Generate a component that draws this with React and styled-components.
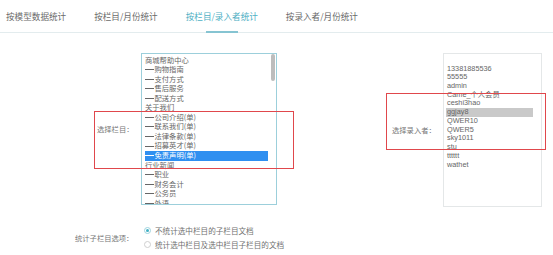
import React from "react";
import styled, { createGlobalStyle } from "styled-components";

const GlobalStyle = createGlobalStyle`
  html, body { margin: 0; padding: 0; background: #fff; }
  body { font-family: "Noto Sans CJK SC", "Liberation Sans", sans-serif; }
  * { box-sizing: border-box; }
`;

const Page = styled.div`
  position: relative;
  width: 553px;
  height: 255px;
  overflow: hidden;
  background: #fff;
`;

const TabBar = styled.div`
  display: flex;
  gap: 28px;
  height: 33px;
  padding-left: 6px;
  border-bottom: 1px solid #e3ecee;
`;

const Tab = styled.div`
  position: relative;
  display: flex;
  align-items: center;
  height: 32px;
  font-size: 8.6px;
  line-height: 1;
  color: ${(p) => (p.$active ? "#4fb0c4" : "#6a6a6a")};
  white-space: nowrap;
  &::after {
    content: "";
    display: ${(p) => (p.$active ? "block" : "none")};
    position: absolute;
    left: 50%;
    bottom: -1px;
    width: 32px;
    margin-left: -16px;
    height: 2px;
    background: #86c4d2;
  }
`;

const Main = styled.div`
  display: flex;
  align-items: flex-start;
  padding-top: 20px;
`;

const Field = styled.div`
  display: flex;
  align-items: center;
  margin-left: ${(p) => p.$offset}px;
`;

const FieldLabel = styled.div`
  width: ${(p) => p.$width}px;
  margin-right: ${(p) => p.$gap}px;
  font-size: 7.3px;
  color: #777;
  white-space: nowrap;
`;

const ListBox = styled.div`
  display: flex;
  width: ${(p) => p.$width}px;
  height: ${(p) => p.$height}px;
  border: 1px solid ${(p) => p.$border};
  overflow: hidden;
  background: #fff;
`;

const Items = styled.div`
  flex: 1;
  padding: ${(p) => p.$pad};
`;

const Item = styled.div`
  height: ${(p) => p.$lh}px;
  line-height: ${(p) => p.$lh}px;
  font-size: 7.3px;
  padding-left: ${(p) => p.$indent || 0}px;
  white-space: nowrap;
  font-family: ${(p) =>
    p.$latin
      ? '"Liberation Sans", "Noto Sans CJK SC", sans-serif'
      : '"Noto Sans CJK SC", "Liberation Sans", sans-serif'};
  color: ${(p) => (p.$selected === "blue" ? "#fff" : "#666")};
  background: ${(p) =>
    p.$selected === "blue"
      ? "#2f8ff0"
      : p.$selected === "gray"
      ? "#c9c9c9"
      : "transparent"};
`;

const Dash = styled.span`
  display: inline-block;
  width: 9px;
  height: 0.8px;
  margin-right: 0.5px;
  vertical-align: middle;
  background: currentColor;
  position: relative;
  top: -0.5px;
`;

const ScrollTrack = styled.div`
  width: 5px;
`;

const ScrollThumb = styled.div`
  width: 4px;
  height: 27px;
  border-radius: 2px;
  background: #bdbdbd;
`;

const Options = styled.div`
  display: flex;
  align-items: center;
  margin-top: 17px;
  margin-left: 75px;
`;

const OptionsLabel = styled.div`
  width: 58px;
  margin-right: 11px;
  font-size: 7.3px;
  color: #777;
  white-space: nowrap;
`;

const RadioGroup = styled.div`
  display: flex;
  flex-direction: column;
`;

const RadioRow = styled.label`
  display: flex;
  align-items: center;
  height: 13.5px;
  font-size: 7.6px;
  color: #707070;
  white-space: nowrap;
`;

const RadioDot = styled.span`
  display: inline-flex;
  align-items: center;
  justify-content: center;
  width: 7px;
  height: 7px;
  border-radius: 50%;
  margin-right: 4px;
  border: 1px solid ${(p) => (p.$checked ? "#9fd3de" : "#cfcfcf")};
  &::after {
    content: "";
    display: ${(p) => (p.$checked ? "block" : "none")};
    width: 3px;
    height: 3px;
    border-radius: 50%;
    background: #3fb0c4;
  }
`;

const RedBox = styled.div`
  position: absolute;
  left: ${(p) => p.$x}px;
  top: ${(p) => p.$y}px;
  width: ${(p) => p.$w}px;
  height: ${(p) => p.$h}px;
  border: 1.3px solid #e0474c;
  pointer-events: none;
`;

const columns = [
  { t: "商城帮助中心" },
  { t: "购物指南", d: true },
  { t: "支付方式", d: true },
  { t: "售后服务", d: true },
  { t: "配送方式", d: true },
  { t: "关于我们" },
  { t: "公司介绍(单)", d: true },
  { t: "联系我们(单)", d: true },
  { t: "法律条款(单)", d: true },
  { t: "招募英才(单)", d: true },
  { t: "免责声明(单)", d: true, sel: true },
  { t: "行业新闻" },
  { t: "职业", d: true },
  { t: "财务会计", d: true },
  { t: "公务员", d: true },
  { t: "外语", d: true },
];

const users = [
  "13381885536",
  "55555",
  "admin",
  "Came_个人会员",
  "ceshi3hao",
  "ggjay8",
  "QWER10",
  "QWER5",
  "sky1011",
  "stu",
  "tttttt",
  "wathet",
];

const tabs = ["按模型数据统计", "按栏目/月份统计", "按栏目/录入者统计", "按录入者/月份统计"];

export default function App() {
  return (
    <Page>
      <GlobalStyle />
      <TabBar>
        {tabs.map((t, i) => (
          <Tab key={t} $active={i === 2}>
            {t}
          </Tab>
        ))}
      </TabBar>
      <Main>
        <Field $offset={97}>
          <FieldLabel $width={36} $gap={8}>选择栏目：</FieldLabel>
          <ListBox $width={136} $height={152} $border="#9ccfdb">
            <Items $pad="1.5px 3px 0 3px">
              {columns.map((c) => (
                <Item key={c.t} $lh={9.55} $selected={c.sel ? "blue" : undefined}>
                  {c.d && <Dash aria-hidden="true" />}
                  {c.t}
                </Item>
              ))}
            </Items>
            <ScrollTrack>
              <ScrollThumb />
            </ScrollTrack>
          </ListBox>
        </Field>
        <Field $offset={115}>
          <FieldLabel $width={41} $gap={10}>选择录入者：</FieldLabel>
          <ListBox $width={99} $height={154} $border="#e4e7e8">
            <Items $pad="10.6px 8px 0 2px">
              {users.map((u) => (
                <Item
                  key={u}
                  $latin
                  $lh={8.73}
                  $indent={1}
                  $selected={u === "ggjay8" ? "gray" : undefined}
                >
                  {u}
                </Item>
              ))}
            </Items>
          </ListBox>
        </Field>
      </Main>
      <Options>
        <OptionsLabel>统计子栏目选项：</OptionsLabel>
        <RadioGroup>
          <RadioRow>
            <RadioDot $checked />
            不统计选中栏目的子栏目文档
          </RadioRow>
          <RadioRow>
            <RadioDot />
            统计选中栏目及选中栏目子栏目的文档
          </RadioRow>
        </RadioGroup>
      </Options>
      <RedBox $x={94} $y={111} $w={200} $h={58} />
      <RedBox $x={386} $y={93} $w={160} $h={57} />
    </Page>
  );
}
